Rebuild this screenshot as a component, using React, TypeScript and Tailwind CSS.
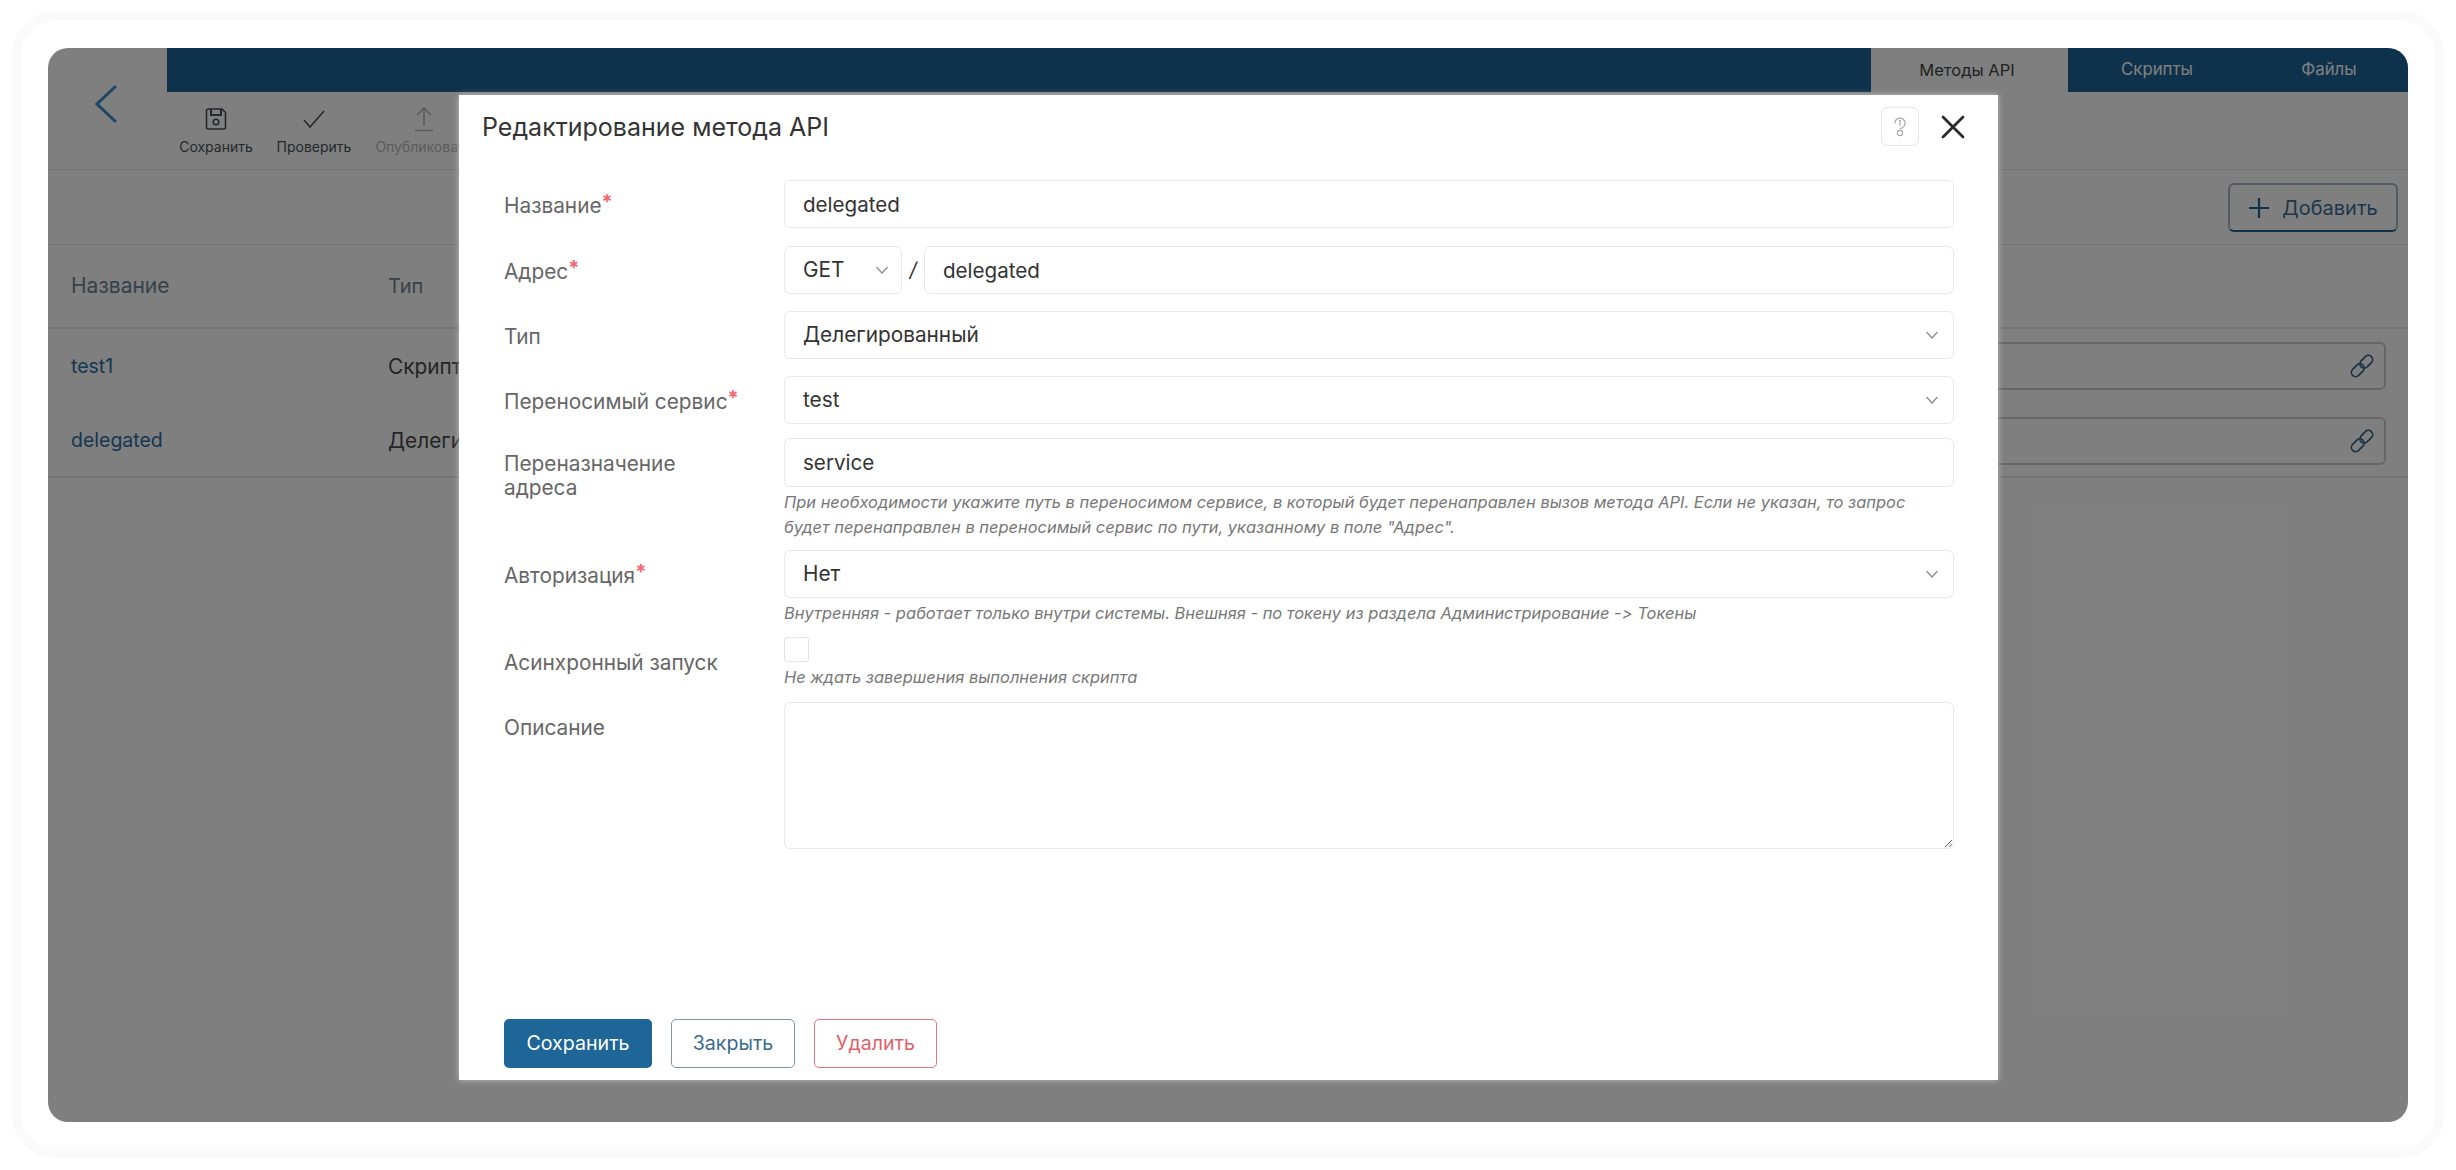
import React from "react";

const Star = () => <span className="text-[#ee6a74] text-[20px] leading-none relative -top-[4px] font-bold">*</span>;

const Chevron = ({ className = "" }: { className?: string }) => (
  <svg width="14" height="10" viewBox="0 0 14 10" fill="none" stroke="#8a8a8a" strokeWidth="1.2" className={className}>
    <path d="M1.5 2 L7 8 L12.5 2" />
  </svg>
);

const LinkIcon = () => (
  <svg width="26" height="26" viewBox="0 0 26 26" fill="none" stroke="#2f6288" strokeWidth="1.6">
    <rect x="1.5" y="13" width="14.5" height="8.5" rx="4.25" transform="rotate(-45 8.75 17.25)" />
    <rect x="10" y="4.5" width="14.5" height="8.5" rx="4.25" transform="rotate(-45 17.25 8.75)" />
  </svg>
);

function Tool({ label, muted, icon, w }: { label: string; muted?: boolean; icon: React.ReactNode; w: string }) {
  return (
    <div className={`flex flex-col items-center ${w} shrink-0 pt-[14px] ${muted ? "text-[#b4b8bc]" : "text-[#4a525a]"}`}>
      <div className="h-[26px] flex items-center justify-center">{icon}</div>
      <div className="text-[14px] leading-[20px] mt-[5px] whitespace-nowrap">{label}</div>
    </div>
  );
}

function Row({ label, req, mt, children }: { label: React.ReactNode; req?: boolean; mt: string; children: React.ReactNode }) {
  return (
    <div className={`flex ${mt}`}>
      <div className="w-[280px] shrink-0 pt-[14px] pr-[30px] text-[20.8px] leading-[23.5px] text-[#666666]">
        {label}
        {req && <Star />}
      </div>
      <div className="flex-1 min-w-0">{children}</div>
    </div>
  );
}

const fieldCls = "h-[48px] w-full border border-[#e8e8e8] rounded-[6px] px-[18px] text-[20.6px] text-[#333] bg-white outline-none";

function Field({ value }: { value: string }) {
  return <input readOnly value={value} className={fieldCls} />;
}

function SelectBox({ value, className = "w-full", right = "pr-[14px]" }: { value: string; className?: string; right?: string }) {
  return (
    <div className={`h-[48px] border border-[#e8e8e8] rounded-[6px] pl-[18px] ${right} text-[20.8px] text-[#333] bg-white flex items-center justify-between ${className}`}>
      <span>{value}</span>
      <Chevron />
    </div>
  );
}

const Hint = ({ children }: { children: React.ReactNode }) => (
  <div className="text-[16.45px] leading-[25px] italic text-[#777777] mt-[3px] whitespace-nowrap [font-variant-ligatures:none] [font-feature-settings:'calt'_0]">{children}</div>
);

export default function App() {
  return (
    <div className="w-[2456px] h-[1170px] bg-white pt-[11px] pl-[12px] [font-family:Inter,sans-serif]">
      <div className="w-[2432px] h-[1147px] border-[9px] border-[#fafafa] rounded-[44px] pt-[28px] pl-[27px]">
        <div className="relative w-[2360px] h-[1074px] rounded-[20px] overflow-hidden bg-white">
          <div className="flex h-[122px] border-b border-[#e6e6e6]">
            <div className="w-[119px] shrink-0 flex items-center justify-center pb-[10px]">
              <svg width="26" height="40" viewBox="0 0 26 40" fill="none" stroke="#3a8fd0" strokeWidth="3">
                <path d="M21 2 L2 20 L21 38" />
              </svg>
            </div>
            <div className="flex-1 flex flex-col">
              <div className="h-[44px] bg-[#1e6598] flex justify-end shrink-0">
                <div className="w-[197px] bg-white flex items-center justify-center pr-[5px] text-[16.5px] text-[#444]">Методы API</div>
                <div className="w-[178px] flex items-center justify-center text-[16.8px] text-white">Скрипты</div>
                <div className="w-[162px] flex items-center justify-center pl-[4px] text-[16.8px] text-white">Файлы</div>
              </div>
              <div className="flex-1 flex">
                <Tool
                  w="w-[98px]"
                  label="Сохранить"
                  icon={
                    <svg width="24" height="24" viewBox="0 0 24 24" fill="none" stroke="#4a525a" strokeWidth="1.6">
                      <path d="M2.5 4 Q2.5 2 4.5 2 H18 L21.5 5.5 V20 Q21.5 22 19.5 22 H4.5 Q2.5 22 2.5 20 Z" />
                      <path d="M7 2 V8 H17 V2" strokeWidth="2" />
                      <circle cx="12" cy="15" r="2.8" />
                    </svg>
                  }
                />
                <Tool
                  w="w-[98px]"
                  label="Проверить"
                  icon={
                    <svg width="24" height="24" viewBox="0 0 24 24" fill="none" stroke="#4a525a" strokeWidth="1.6">
                      <path d="M2 13 L8 20 L22 4" />
                    </svg>
                  }
                />
                <Tool
                  w="w-[122px]"
                  muted
                  label="Опубликовать"
                  icon={
                    <svg width="24" height="26" viewBox="0 0 24 26" fill="none" stroke="#b4b8bc" strokeWidth="1.6">
                      <path d="M12 20 V2 M5 9 L12 2 L19 9 M3 24.5 H21" />
                    </svg>
                  }
                />
              </div>
            </div>
          </div>

          <div className="h-[75px] border-b border-[#e6e6e6] flex justify-end items-start pr-[10px] pt-[13px]">
            <div className="w-[170px] h-[49px] border-2 border-[#a8b4be] border-b-[#1e6598] rounded-[6px] flex items-center justify-center gap-[12px] text-[20px] text-[#3c6f96]">
              <svg width="22" height="22" viewBox="0 0 22 22" stroke="#1e6598" strokeWidth="2.2">
                <path d="M11 1 V21 M1 11 H21" />
              </svg>
              Добавить
            </div>
          </div>

          <div className="h-[84px] border-b-2 border-[#e6e6e6] flex items-center pl-[23px] text-[21px] text-[#6e8292]">
            <div className="w-[317px]">Название</div>
            <div className="text-[20px]">Тип</div>
          </div>

          {[
            ["test1", "Скрипт"],
            ["delegated", "Делегированный"],
          ].map(([name, type], i) => (
            <div key={name} className={`flex items-center pl-[23px] pr-[22px] text-[20.8px] ${i === 0 ? "h-[76px]" : "h-[73px] border-b-2 border-[#e6e6e6]"}`}>
              <div className="w-[317px] text-[19.5px] text-[#2a6fa3]">{name}</div>
              <div className="w-[600px] text-[#4a4a4a]">{type}</div>
              <div className={`flex-1 h-[48px] border-2 border-[#cccccc] rounded-[6px] flex items-center justify-end pr-[9px] ${i === 0 ? "-mt-[2px]" : ""}`}>
                <LinkIcon />
              </div>
            </div>
          ))}

          <div className="absolute inset-0 bg-black/50" />

          <div className="absolute left-[411px] top-[47px] w-[1539px] h-[985px] bg-white shadow-[0_0_6px_rgba(255,255,255,0.5)] flex flex-col pl-[45px] pr-[44px] pb-[12px] text-[#333]">
            <div className="h-[85px] shrink-0 flex items-start -ml-[22px]">
              <div className="flex-1 text-[25px] leading-[32px] pt-[16px] text-[#333333]">Редактирование метода API</div>
              <div className="mt-[12px] w-[38px] h-[39px] border border-[#e6e6e6] rounded-[6px] flex items-center justify-center">
                <svg width="14" height="20" viewBox="0 0 14 20" fill="none" stroke="#a8a8a8" strokeWidth="1.2">
                  <path d="M2 6.5 A5 5 0 1 1 9.5 10.5 L7 12" />
                  <path d="M6 3.5 H8 M7 3.5 V9" />
                  <circle cx="7" cy="16" r="2.6" />
                </svg>
              </div>
              <div className="ml-[22px] mr-[-11px] mt-[20px]">
                <svg width="24" height="24" viewBox="0 0 24 24" fill="none" stroke="#2b2b2b" strokeWidth="2.8" strokeLinecap="round">
                  <path d="M2 2 L22 22 M22 2 L2 22" />
                </svg>
              </div>
            </div>

            <Row label="Название" req mt="mt-0">
              <Field value="delegated" />
            </Row>
            <Row label="Адрес" req mt="mt-[18px]">
              <div className="flex items-center">
                <SelectBox value="GET" className="w-[118px] shrink-0" right="pr-[12px]" />
                <span className="w-[22px] text-center text-[20px] italic text-[#333] shrink-0">/</span>
                <input readOnly value="delegated" className={`${fieldCls} flex-1 min-w-0`} />
              </div>
            </Row>
            <Row label="Тип" mt="mt-[17px]">
              <SelectBox value="Делегированный" />
            </Row>
            <Row label="Переносимый сервис" req mt="mt-[17px]">
              <SelectBox value="test" />
            </Row>
            <Row label={<>Переназначение<br />адреса</>} mt="mt-[14px]">
              <input readOnly value="service" className={`${fieldCls} h-[49px]`} />
              <Hint>
                При необходимости укажите путь в переносимом сервисе, в который будет перенаправлен вызов метода API. Если не указан, то запрос<br />
                будет перенаправлен в переносимый сервис по пути, указанному в поле "Адрес".
              </Hint>
            </Row>
            <Row label="Авторизация" req mt="mt-[10px]">
              <SelectBox value="Нет" />
              <Hint>Внутренняя - работает только внутри системы. Внешняя - по токену из раздела Администрирование -&gt; Токены</Hint>
            </Row>
            <Row label="Асинхронный запуск" mt="mt-[11px]">
              <div className="w-[25px] h-[25px] border border-[#e4e4e4] rounded-[3px]" />
              <Hint>Не ждать завершения выполнения скрипта</Hint>
            </Row>
            <Row label="Описание" mt="mt-[12px]">
              <textarea readOnly className="block w-full h-[147px] border border-[#e8e8e8] rounded-[6px] outline-none resize-y" />
            </Row>

            <div className="mt-auto flex gap-[19px] text-[19.6px]">
              <div className="w-[148px] h-[49px] bg-[#1e6598] rounded-[5px] text-white flex items-center justify-center">Сохранить</div>
              <div className="w-[124px] h-[49px] border border-[#7f93a3] rounded-[5px] text-[#3a6a90] flex items-center justify-center">Закрыть</div>
              <div className="w-[123px] h-[49px] border border-[#e5737b] rounded-[5px] text-[#e0616a] flex items-center justify-center">Удалить</div>
            </div>
          </div>
        </div>
      </div>
    </div>
  );
}
